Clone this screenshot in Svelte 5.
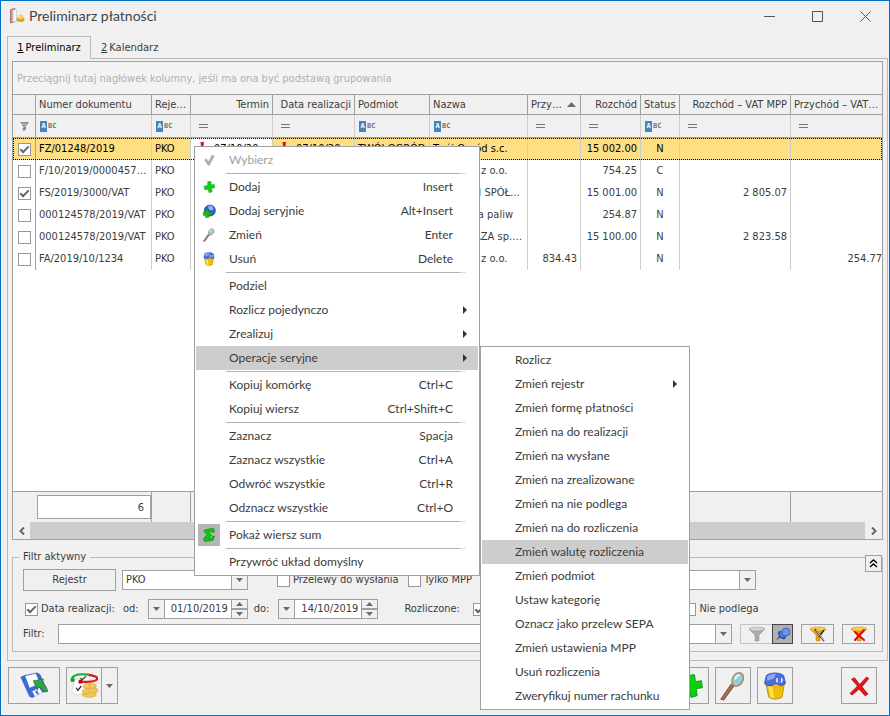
<script lang="ts">
  type MenuItem = {
    label?: string;
    keys?: string;
    icon?: string;
    sub?: boolean;
    active?: boolean;
    disabled?: boolean;
    pressed?: boolean;
    sep?: boolean;
  };

  // width 0 = takes whatever is left over
  const columns = [
    { title: "", width: 23, filter: "funnel", align: "center" },
    { title: "Numer dokumentu", width: 116, filter: "abc", align: "left" },
    { title: "Rejestr", width: 39, filter: "abc", align: "left" },
    { title: "Termin", width: 82, filter: "eq", align: "right" },
    { title: "Data realizacji", width: 82, filter: "eq", align: "right" },
    { title: "Podmiot", width: 75, filter: "abc", align: "left" },
    { title: "Nazwa", width: 98, filter: "abc", align: "left" },
    { title: "Przychód", width: 53, filter: "eq", align: "right", sorted: true },
    { title: "Rozchód", width: 60, filter: "eq", align: "right" },
    { title: "Status", width: 39, filter: "abc", align: "center" },
    { title: "Rozchód – VAT MPP", width: 111, filter: "eq", align: "right" },
    { title: "Przychód – VAT MPP", width: 0, filter: "eq", align: "right" },
  ];

  let rows = $state([
    { checked: true, doc: "FZ/01248/2019", date: "07/10/2019", subject: "TWÓJ OGRÓD", name: "Twój Ogród s.c.", income: "", cost: "15 002.00", status: "N", vatCost: "", vatIncome: "" },
    { checked: false, doc: "F/10/2019/000045789", date: "07/10/2019", subject: "FIRMA", name: "Firma sp. z o.o.", income: "", cost: "754.25", status: "C", vatCost: "", vatIncome: "" },
    { checked: true, doc: "FS/2019/3000/VAT", date: "08/10/2019", subject: "BUDTECH", name: "BUDTECH SPÓŁKA Z O.O.", income: "", cost: "15 001.00", status: "N", vatCost: "2 805.07", vatIncome: "" },
    { checked: false, doc: "000124578/2019/VAT", date: "09/10/2019", subject: "PALIWA", name: "Hurtownia paliw", income: "", cost: "254.87", status: "N", vatCost: "", vatIncome: "" },
    { checked: false, doc: "000124578/2019/VAT", date: "10/10/2019", subject: "BAZA", name: "NOWA BAZA sp. z o.o.", income: "", cost: "15 100.00", status: "N", vatCost: "2 823.58", vatIncome: "" },
    { checked: false, doc: "FA/2019/10/1234", date: "11/10/2019", subject: "FIRMA", name: "Firma sp. z o.o.", income: "834.43", cost: "", status: "N", vatCost: "", vatIncome: "254.77" },
  ]);

  const contextMenu: MenuItem[] = [
    { label: "Wybierz", icon: "tick", disabled: true },
    { sep: true },
    { label: "Dodaj", keys: "Insert", icon: "plus" },
    { label: "Dodaj seryjnie", keys: "Alt+Insert", icon: "series" },
    { label: "Zmień", keys: "Enter", icon: "lens" },
    { label: "Usuń", keys: "Delete", icon: "bin" },
    { sep: true },
    { label: "Podziel" },
    { label: "Rozlicz pojedynczo", sub: true },
    { label: "Zrealizuj", sub: true },
    { label: "Operacje seryjne", sub: true, active: true },
    { sep: true },
    { label: "Kopiuj komórkę", keys: "Ctrl+C" },
    { label: "Kopiuj wiersz", keys: "Ctrl+Shift+C" },
    { sep: true },
    { label: "Zaznacz", keys: "Spacja" },
    { label: "Zaznacz wszystkie", keys: "Ctrl+A" },
    { label: "Odwróć wszystkie", keys: "Ctrl+R" },
    { label: "Odznacz wszystkie", keys: "Ctrl+O" },
    { sep: true },
    { label: "Pokaż wiersz sum", icon: "sum", pressed: true },
    { sep: true },
    { label: "Przywróć układ domyślny" },
  ];

  const subMenu: MenuItem[] = [
    { label: "Rozlicz" },
    { label: "Zmień rejestr", sub: true },
    { label: "Zmień formę płatności" },
    { label: "Zmień na do realizacji" },
    { label: "Zmień na wysłane" },
    { label: "Zmień na zrealizowane" },
    { label: "Zmień na nie podlega" },
    { label: "Zmień na do rozliczenia" },
    { label: "Zmień walutę rozliczenia", active: true },
    { label: "Zmień podmiot" },
    { label: "Ustaw kategorię" },
    { label: "Oznacz jako przelew SEPA" },
    { label: "Zmień ustawienia MPP" },
    { label: "Usuń rozliczenia" },
    { label: "Zweryfikuj numer rachunku" },
  ];

  let register = $state("PKO");
  let dateFrom = $state("01/10/2019");
  let dateTo = $state("14/10/2019");
  let filterText = $state("");
</script>

{#snippet icon(name: string, size: number)}
  <svg width={size} height={size} viewBox="0 0 32 32" aria-hidden="true">
    {#if name === "app"}
      <path d="M3 3 12 1v26l-9 3z" fill="#c9a3a3" stroke="#8d5558" stroke-width="1.5" />
      <path d="M8 4 15 3v24l-7 1z" fill="#f7f7f7" stroke="#b9b9b9" />
      <ellipse cx="23" cy="23" rx="8" ry="5" fill="#d9a520" />
      <ellipse cx="23" cy="18" rx="6" ry="5" fill="#f3cf55" />
      <ellipse cx="21" cy="17" rx="3" ry="2" fill="#fbe9a0" />
    {:else if name === "tick"}
      <path d="M6 16 10 13l5 7L23 5l5 2L17 28h-3z" fill="#b0b0b0" stroke="#989898" />
    {:else if name === "plus"}
      <path d="M13 4l7-1 1 8 7-1 1 8-7 1 1 8-7 2-2-8-8 1-1-8 8-2z" fill="#0bd00f" stroke="#07960b" />
    {:else if name === "series"}
      <circle cx="18" cy="15" r="13" fill="#2e62c6" stroke="#1d3f8c" />
      <path d="M14 6q8-5 13 4-4 7-11 3z" fill="#8fb6f4" />
      <path d="M8 13h7v6h6v7h-6v5H8v-5H3v-7h5z" fill="#16bd18" stroke="#0a7d0d" />
    {:else if name === "lens"}
      <path d="M17 16 6 31l-3-1 11-16z" fill="#a8714f" stroke="#6f452e" />
      <ellipse cx="21" cy="9" rx="5.5" ry="7.5" transform="rotate(30 21 9)" fill="#8fd0df" stroke="#b0906c" stroke-width="1.8" />
      <path d="M18 9q1-4 5-5" stroke="#e2f8fc" stroke-width="2" fill="none" />
    {:else if name === "bin"}
      <path d="M5 12h22l-3 17q-8 4-15 0z" fill="#f0bd0b" stroke="#a77c00" stroke-width=".8" />
      <path d="M8 15l3 14 4 1-2-14z" fill="#ffe14d" />
      <path d="M4 13 6 4Q9 1 16 1t10 3l2 9-5 3-6-3-5 3q-6 0-8-3z" fill="#4a6ee0" stroke="#2848a6" stroke-width=".8" />
      <path d="M7 5q3-3 10-3l-2 5-8 3z" fill="#8faaf4" />
      <path d="M19 7q-2 2 0 5m4-5q2 2 0 5" fill="none" stroke="#fff" stroke-width="1.5" />
    {:else if name === "sum"}
      <path d="M7 6 25 2l2 8-5 1-1-3-5 1 5 7-5 7 6-1 1-4h4l-3 9-17 2-2-6 7-8-7-7z" fill="#08c90c" stroke="#067b08" />
    {:else if name === "save"}
      <path d="M1 6 5 4 20 1l3 2 8 18-17 8-3-1z" fill="#3a6ad4" stroke="#2a4fa8" stroke-width=".6" />
      <path d="M6 4.500 18 2l5 11-12 5z" fill="#fcfdff" />
      <path d="M14 22l8-4 4 6-9 4z" fill="#f3f6fc" />
      <path d="M17 22l2-1 3 4-2 1z" fill="#3a6ad4" />
      <path d="M15 10l12-2-2 4q5 3 7 10l-3 1q-4-5-8-6l-1 4z" fill="#2fa545" stroke="#1b6c2b" stroke-width=".6" />
    {:else if name === "settle"}
      <path d="M5 9 22 5l4 18-19 3-5-3z" fill="#fff" stroke="#ccc" stroke-width=".7" />
      <path d="M7 18l2 3 4-5M12 7l2 2 4-4" stroke="#333" stroke-width="1.500" fill="none" />
      <path d="M2 8Q4 1 21 3" stroke="#12ad2b" stroke-width="2.500" fill="none" />
      <path d="M21 3q11 2 10 5-1 4-19 3" stroke="#d51820" stroke-width="2.500" fill="none" />
      <circle cx="3" cy="9" r="2.500" fill="#12a72b" />
      <circle cx="12" cy="11" r="2.500" fill="#d5000d" />
      <g fill="#edc957" stroke="#c79d34" stroke-width=".6">
        <ellipse cx="22" cy="26" rx="8" ry="3" />
        <ellipse cx="19" cy="22" rx="5" ry="3" />
        <ellipse cx="27" cy="21" rx="5" ry="3" />
        <ellipse cx="20" cy="16" rx="5" ry="3" />
        <ellipse cx="26" cy="16" rx="4" ry="3" />
      </g>
    {:else if name === "cross"}
      <path d="M6 7l4-2 7 9 9-10 3 2-9 11 8 10-4 2-8-9-9 8-3-2 10-10z" fill="#e5141c" stroke="#b0080d" />
    {:else if name === "warn"}
      <path d="M13 2h7l-2 17h-3z" fill="#e01010" />
      <circle cx="16" cy="26" r="4" fill="#d00" />
    {/if}
  </svg>
{/snippet}

{#snippet funnel(kind: string)}
  <svg width="20" height="16" viewBox="0 0 20 16" aria-hidden="true">
    <path
      d="M2 3 8 9v6h4V9l6-6z"
      fill={kind === "gray" ? "#ababab" : "#e8a017"}
      stroke={kind === "gray" ? "#8b8b8b" : "#c9830d"}
      stroke-width=".5"
    />
    <ellipse cx="10" cy="3" rx="8" ry="2" fill={kind === "gray" ? "#d3d3d3" : "#ffc94a"} stroke={kind === "gray" ? "#949494" : "#c9830d"} stroke-width=".5" />
    {#if kind === "edit"}
      <path d="M7 3l9 12M16 4l-5 7" stroke="#333" stroke-width="1.600" />
      <path d="M8 4l8 10.500" stroke="#f5f5f5" stroke-width=".8" />
    {:else if kind === "clear"}
      <path d="M6 6l9 8M15 4 6 14" stroke="#dc0c12" stroke-width="2" stroke-linecap="round" />
    {/if}
  </svg>
{/snippet}

{#snippet arrow(dir: string)}
  <svg width="7" height="4" viewBox="0 0 7 4" aria-hidden="true">
    <path d={dir === "up" ? "M0 4 3.5 0 7 4z" : "M0 0h7L3.5 4z"} fill="#6a6a6a" />
  </svg>
{/snippet}

{#snippet menu(items: MenuItem[], cls: string)}
  <div class="menu {cls}" role="menu">
    {#each items as item}
      {#if item.sep}
        <div class="sep" role="separator"></div>
      {:else}
        <button class="item" class:active={item.active} disabled={item.disabled} role="menuitem">
          <span class="item-icon" class:pressed={item.pressed}>
            {#if item.icon}{@render icon(item.icon, item.icon === "sum" ? 16 : 14)}{/if}
          </span>
          <span class="item-label">{item.label}</span>
          {#if item.keys}<span class="keys">{item.keys}</span>{/if}
          {#if item.sub}
            <svg class="sub" width="4" height="8" viewBox="0 0 4 8" aria-hidden="true"><path d="M0 0 4 4 0 8z" fill="#333" /></svg>
          {/if}
        </button>
      {/if}
    {/each}
  </div>
{/snippet}

{#snippet colgroup()}
  <colgroup>
    {#each columns as col}
      <col style={col.width ? `width: ${col.width}px` : ""} />
    {/each}
  </colgroup>
{/snippet}

<div class="window">
  <header class="titlebar">
    {@render icon("app", 16)}
    <h1>Preliminarz płatności</h1>
    <div class="window-buttons">
      <button aria-label="Minimalizuj"><svg width="11" height="11" viewBox="0 0 11 11"><path d="M0 5.5h11" /></svg></button>
      <button aria-label="Maksymalizuj"><svg width="11" height="11" viewBox="0 0 11 11"><path d="M.5.5h10v10H.5z" /></svg></button>
      <button aria-label="Zamknij"><svg width="11" height="11" viewBox="0 0 11 11"><path d="M.5.5l10 10M10.5.5l-10 10" /></svg></button>
    </div>
  </header>

  <div class="tabs" role="tablist">
    <button class="tab selected" role="tab" aria-selected="true"><u>1</u> Preliminarz</button>
    <button class="tab" role="tab" aria-selected="false"><u>2</u> Kalendarz</button>
  </div>

  <main class="page">
    <section class="grid">
      <div class="group-panel">Przeciągnij tutaj nagłówek kolumny, jeśli ma ona być podstawą grupowania</div>
      <table class="data">
        {@render colgroup()}
        <thead>
          <tr class="head">
            {#each columns as col}
              <th class={col.align === "right" && !col.sorted ? "right" : "left"}>
                {#if col.sorted}
                  <span class="sorted">
                    <span class="clip">{col.title}</span>
                    <svg width="9" height="5" viewBox="0 0 9 5"><path d="M0 5 4.5 0 9 5z" fill="#6a6a6a" /></svg>
                  </span>
                {:else}
                  {col.title}
                {/if}
              </th>
            {/each}
          </tr>
          <tr class="filters">
            {#each columns as col}
              <td>
                {#if col.filter === "abc"}
                  <span class="abc"><b>A</b>BC</span>
                {:else if col.filter === "eq"}
                  <span class="eq"></span>
                {:else}
                  <svg class="mini-funnel" width="9" height="10" viewBox="0 0 9 10"><path d="M0 1h9L6 5v4L3 10V5z" fill="#8c8c8c" /><path d="M2 3h4M2 8l4-4" stroke="#c5c5c5" /></svg>
                {/if}
              </td>
            {/each}
          </tr>
        </thead>
        <tbody>
          {#each rows as row, i}
            <tr class:current={i === 0}>
              <td class="check"><input type="checkbox" bind:checked={row.checked} aria-label={row.doc} /></td>
              <td>{row.doc}</td>
              <td>PKO</td>
              <td class="right" class:focused={i === 0}>
                <span class="dated">{#if i === 0}{@render icon("warn", 16)}{/if}<span class="clip">{row.date}</span></span>
              </td>
              <td class="right">
                <span class="dated">{#if i === 0}{@render icon("warn", 16)}{/if}<span class="clip">{row.date}</span></span>
              </td>
              <td>{row.subject}</td>
              <td>{row.name}</td>
              <td class="right">{row.income}</td>
              <td class="right">{row.cost}</td>
              <td class="center">{row.status}</td>
              <td class="right">{row.vatCost}</td>
              <td class="right edge">{row.vatIncome}</td>
            </tr>
          {/each}
        </tbody>
      </table>
      <div class="empty"></div>
      <table class="summary">
        {@render colgroup()}
        <tbody>
          <tr>
            {#each columns as col, i}
              <td>{#if i === 1}<output>{rows.length}</output>{/if}</td>
            {/each}
          </tr>
        </tbody>
      </table>
      <div class="scroll">
        <button aria-label="W lewo"><svg width="6" height="8" viewBox="0 0 6 8"><path d="M5 .5 1.5 4 5 7.5" /></svg></button>
        <div class="thumb"></div>
        <button aria-label="W prawo"><svg width="6" height="8" viewBox="0 0 6 8"><path d="M1 .5 4.5 4 1 7.5" /></svg></button>
      </div>
    </section>

    <fieldset class="filter-box">
      <legend>Filtr aktywny</legend>
      <button class="collapse" aria-label="Zwiń">
        <svg width="9" height="9" viewBox="0 0 9 9"><path d="M1 4 4.5 1 8 4M1 8l3.5-3L8 8" fill="none" stroke="#000" stroke-width="1.4" /></svg>
      </button>

      <div class="line first">
        <button class="push">Rejestr</button>
        <div class="combo register">
          <select bind:value={register} aria-label="Rejestr"><option>PKO</option></select>
          <span class="drop">{@render arrow("down")}</span>
        </div>
        <label class="transfers"><input type="checkbox" /> Przelewy do wysłania</label>
        <label class="mpp"><input type="checkbox" /> Tylko MPP</label>
        <div class="combo kind">
          <select aria-label="Rodzaj"><option></option></select>
          <span class="drop">{@render arrow("down")}</span>
        </div>
      </div>

      <div class="line second">
        <label class="by-date"><input type="checkbox" checked /> Data realizacji:</label>
        <label for="from">od:</label>
        <div class="combo date">
          <button class="drop" aria-label="Kalendarz od">{@render arrow("down")}</button>
          <input id="from" type="text" bind:value={dateFrom} />
          <span class="spin">
            <button aria-label="Później">{@render arrow("up")}</button>
            <button aria-label="Wcześniej">{@render arrow("down")}</button>
          </span>
        </div>
        <label for="to">do:</label>
        <div class="combo date">
          <button class="drop" aria-label="Kalendarz do">{@render arrow("down")}</button>
          <input id="to" type="text" bind:value={dateTo} />
          <span class="spin">
            <button aria-label="Później">{@render arrow("up")}</button>
            <button aria-label="Wcześniej">{@render arrow("down")}</button>
          </span>
        </div>
        <label class="settled">Rozliczone: <input type="checkbox" checked /></label>
        <label class="exempt"><input type="checkbox" /> Nie podlega</label>
      </div>

      <div class="line third">
        <label for="filter">Filtr:</label>
        <div class="combo filter">
          <input id="filter" type="text" bind:value={filterText} />
          <button class="drop" aria-label="Lista filtrów">{@render arrow("down")}</button>
        </div>
        <div class="toggle">
          <button aria-label="Filtruj">{@render funnel("gray")}</button>
          <button class="down" aria-label="Przypnij filtr">
            <svg width="16" height="14" viewBox="0 0 16 14"><path d="M1 13 5 8l2 2z" fill="#555" /><ellipse cx="7" cy="8" rx="3" ry="5" transform="rotate(-40 7 8)" fill="#2546a8" /><circle cx="8" cy="7" r="3.500" fill="#4d7ae6" /><circle cx="11" cy="5" r="4" fill="#6d94ee" stroke="#2a4cae" stroke-width=".7" /></svg>
          </button>
        </div>
        <button class="small" aria-label="Edytuj filtr">{@render funnel("edit")}</button>
        <button class="small" aria-label="Usuń filtr">{@render funnel("clear")}</button>
      </div>
    </fieldset>
  </main>

  <footer class="toolbar">
    <button class="tool wide" aria-label="Zapisz">{@render icon("save", 28)}</button>
    <div class="split">
      <button class="main" aria-label="Rozlicz">{@render icon("settle", 28)}</button>
      <button class="more" aria-label="Więcej">{@render arrow("down")}</button>
    </div>
    <div class="tool-group">
      <button class="tool" aria-label="Dodaj">{@render icon("plus", 28)}</button>
      <button class="tool" aria-label="Zmień">{@render icon("lens", 30)}</button>
      <button class="tool" aria-label="Usuń">{@render icon("bin", 28)}</button>
    </div>
    <button class="tool" aria-label="Zamknij okno">{@render icon("cross", 24)}</button>
  </footer>

  {@render menu(contextMenu, "context")}
  {@render menu(subMenu, "nested")}
</div>

<style>
  :global(body) {
    margin: 0;
  }
  .window,
  .window * {
    box-sizing: border-box;
  }
  .window {
    position: relative;
    display: flex;
    flex-direction: column;
    min-height: 100vh;
    border: 1px solid #0072c6;
    background: #f0f0f0;
    color: #3c3c3c;
    font: 11px/14px "DejaVu Sans Condensed", "Noto Sans", sans-serif;
    overflow: hidden;
  }
  button,
  input,
  select {
    margin: 0;
    padding: 0;
    border: 0;
    border-radius: 0;
    background: none;
    color: inherit;
    font: inherit;
  }
  button {
    display: flex;
    align-items: center;
    justify-content: center;
  }
  svg {
    flex: none;
    display: block;
  }

  .titlebar {
    display: flex;
    align-items: center;
    height: 30px;
    padding-left: 8px;
    gap: 4px;
  }
  h1 {
    flex: 1;
    margin: 0;
    font: 14px/20px Lato, "Open Sans", sans-serif;
    color: #444;
  }
  .window-buttons {
    display: flex;
  }
  .window-buttons button {
    width: 48px;
    height: 30px;
  }
  .window-buttons path {
    fill: none;
    stroke: #555;
  }

  .tabs {
    position: relative;
    display: flex;
    height: 28px;
    padding: 5px 6px 0;
  }
  .tab {
    gap: 2px;
    padding: 0 10px;
    height: 23px;
  }
  .tab.selected {
    z-index: 1;
    width: 84px;
    border: 1px solid #b9b9b9;
    border-bottom: 0;
    background: #f0f0f0;
    color: #000;
  }

  .page {
    flex: 1;
    display: flex;
    flex-direction: column;
    gap: 9px;
    margin: -1px 1px 0 6px;
    padding: 2px 4px 8px;
    border: 1px solid #b9b9b9;
  }
  .grid {
    flex: 1;
    display: flex;
    flex-direction: column;
    border: 1px solid #a0a0a0;
  }
  .group-panel {
    height: 32px;
    padding: 0 4px;
    background: #f3f3f3;
    color: #b0b0b0;
    line-height: 34px;
  }
  table {
    width: 100%;
    table-layout: fixed;
    border-collapse: separate;
    border-spacing: 0;
  }
  .data {
    background: #fff;
  }
  th,
  td {
    height: 22px;
    padding: 0 3px;
    border-right: 1px solid #cdcdcd;
    overflow: hidden;
    white-space: nowrap;
    text-overflow: ellipsis;
    text-align: left;
    font-weight: normal;
  }
  th:last-child,
  td:last-child {
    border-right: 0;
  }
  td:first-child {
    border-right-color: #a0a0a0;
  }
  .head th {
    height: 21px;
    border-top: 1px solid #a0a0a0;
    border-bottom: 1px solid #a0a0a0;
    border-right-color: #a0a0a0;
    background: #f0f0f0;
  }
  .filters td {
    height: 23px;
    padding: 0 4px;
    border-bottom: 1px solid #a0a0a0;
    background: #f0f0f0;
  }
  th.right,
  td.right {
    text-align: right;
  }
  td.center {
    text-align: center;
  }
  td.edge {
    padding-right: 0;
  }
  .sorted {
    display: flex;
    align-items: center;
    gap: 4px;
    padding-right: 1px;
  }
  .clip {
    overflow: hidden;
    text-overflow: ellipsis;
  }
  .abc {
    display: flex;
    align-items: center;
    height: 11px;
    color: #777;
    font: bold 7px/11px "DejaVu Sans Mono", monospace;
  }
  .abc b {
    width: 7px;
    margin-right: 1px;
    background: #4a82bd;
    color: #fff;
    text-align: center;
  }
  .eq {
    display: block;
    width: 9px;
    height: 4px;
    margin-left: 4px;
    border: 1px solid #777;
    border-width: 1px 0;
  }
  .mini-funnel {
    margin: 0 auto;
  }
  td.check {
    padding: 0 5px;
  }
  .check input {
    display: block;
  }
  .current {
    outline: 1px dotted #000;
    outline-offset: -1px;
    color: #000;
  }
  .current td {
    background: #ffdf84;
  }
  .current td.focused {
    background: #fff;
  }
  .dated {
    display: flex;
    align-items: center;
  }
  .dated .clip {
    flex: 1;
    padding-left: 4px;
    text-align: left;
  }
  .empty {
    flex: 1;
    background: #fff;
  }
  .summary td {
    height: 31px;
    padding: 0 0 0 1px;
    border-top: 1px solid #a0a0a0;
    border-right-color: #a0a0a0;
  }
  .summary td:first-child {
    border-right: 0;
  }
  output {
    display: block;
    height: 24px;
    padding-right: 6px;
    border: 1px solid #a0a0a0;
    background: #fff;
    line-height: 24px;
    text-align: right;
  }
  .scroll {
    display: flex;
    height: 17px;
  }
  .scroll button {
    width: 17px;
  }
  .scroll path {
    fill: none;
    stroke: #666;
    stroke-width: 2;
  }
  .thumb {
    flex: 1;
    background: #cdcdcd;
  }

  input[type="checkbox"] {
    appearance: none;
    position: relative;
    flex: none;
    width: 13px;
    height: 13px;
    border: 1px solid #979797;
    background: #fff;
  }
  input[type="checkbox"]:checked::after {
    content: "";
    position: absolute;
    box-sizing: border-box;
    left: 1px;
    top: 2px;
    width: 9px;
    height: 5px;
    border: solid #666;
    border-width: 0 0 2px 2px;
    transform: rotate(-45deg);
  }

  .filter-box {
    position: relative;
    min-width: 0;
    margin: 0;
    padding: 4px 7px 7px 10px;
    border: 1px solid #b9b9b9;
  }
  legend {
    margin-left: -4px;
    padding: 0 4px;
    line-height: 16px;
  }
  .collapse {
    position: absolute;
    right: 0;
    top: -10px;
    width: 17px;
    height: 17px;
    border: 1px solid #a0a0a0;
    background: #f0f0f0;
  }
  .line {
    display: flex;
    align-items: center;
    height: 22px;
  }
  .second,
  .third {
    height: 20px;
    margin-top: 8px;
  }
  .third {
    margin-top: 5px;
  }
  .line label {
    display: flex;
    flex: none;
    align-items: center;
    gap: 3px;
    white-space: nowrap;
  }
  .push {
    width: 93px;
    height: 22px;
    border: 1px solid #a0a0a0;
  }
  .combo {
    display: flex;
    height: 20px;
    border: 1px solid #a0a0a0;
    background: #fff;
  }
  .combo select,
  .combo input {
    flex: 1;
    min-width: 0;
    padding: 0 3px;
    appearance: none;
    outline: 0;
  }
  .drop {
    display: flex;
    align-items: center;
    justify-content: center;
    width: 16px;
    border-left: 1px solid #a0a0a0;
    background: #f0f0f0;
    pointer-events: none;
  }
  .register {
    width: 126px;
    margin-left: 6px;
  }
  .transfers {
    width: 131px;
    margin-left: 29px;
  }
  .kind {
    width: 136px;
    margin-left: 148px;
  }
  .date {
    width: 100px;
    margin: 0 6px 0 9px;
  }
  .date .drop {
    border-left: 0;
    border-right: 1px solid #a0a0a0;
  }
  .date input {
    text-align: right;
  }
  .spin {
    display: flex;
    flex-direction: column;
    width: 16px;
    border-left: 1px solid #a0a0a0;
    background: #f0f0f0;
  }
  .spin button {
    flex: 1;
  }
  .spin button + button {
    border-top: 2px solid #a0a0a0;
  }
  .by-date {
    width: 98px;
    margin-left: 2px;
  }
  .settled {
    width: 82px;
    margin-left: 20px;
    justify-content: space-between;
  }
  .exempt {
    margin-left: 197px;
  }
  .third label {
    width: 35px;
  }
  .filter {
    flex: 1;
  }
  .toggle {
    display: flex;
    margin: 0 8px;
    border: 1px solid #c4c4c4;
    border-right: 0;
  }
  .toggle button {
    width: 31px;
    height: 18px;
  }
  .toggle .down {
    width: 21px;
    height: 20px;
    margin: -1px 0;
    border: 1px solid #444;
    background: #b0b0b0;
  }
  .small {
    width: 33px;
    height: 20px;
    border: 1px solid #a0a0a0;
  }
  .small + .small {
    margin-left: 8px;
  }

  .toolbar {
    display: flex;
    padding: 6px 12px 11px 7px;
  }
  .tool,
  .split {
    width: 36px;
    height: 37px;
    border: 1px solid #a0a0a0;
  }
  .tool.wide,
  .split {
    width: 52px;
  }
  .split {
    display: flex;
    margin-left: 6px;
  }
  .main {
    flex: 1;
  }
  .more {
    width: 16px;
    border-left: 1px solid #a0a0a0;
  }
  .tool-group {
    display: flex;
    gap: 6px;
    margin: 0 48px 0 auto;
  }

  /* popups float over the window */
  .menu {
    position: absolute;
    padding: 1px;
    border: 1px solid #a0a0a0;
    background: #fff;
    font: 12px/16px Lato, "Open Sans", sans-serif;
    white-space: nowrap;
  }
  .context {
    left: 193px;
    top: 145px;
    width: 286px;
  }
  .nested {
    left: 479px;
    top: 345px;
    width: 210px;
  }
  .item {
    width: 100%;
    height: 24px;
    padding-right: 25px;
    text-align: left;
  }
  .item.active {
    background: #cdcdcd;
  }
  .item:disabled {
    color: #a0a0a0;
  }
  .item-icon {
    display: flex;
    flex: none;
    align-items: center;
    justify-content: center;
    width: 22px;
    height: 22px;
    margin: 0 9px 0 2px;
  }
  .item-icon.pressed {
    background: #b5b5b5;
  }
  .item-label {
    flex: 1;
  }
  .sub {
    margin-right: -14px;
  }
  .sep {
    height: 1px;
    margin: 1px 12px 1px 30px;
    border-right: 6px solid #dcdcdc;
    background: #b4b4b4;
  }
</style>
